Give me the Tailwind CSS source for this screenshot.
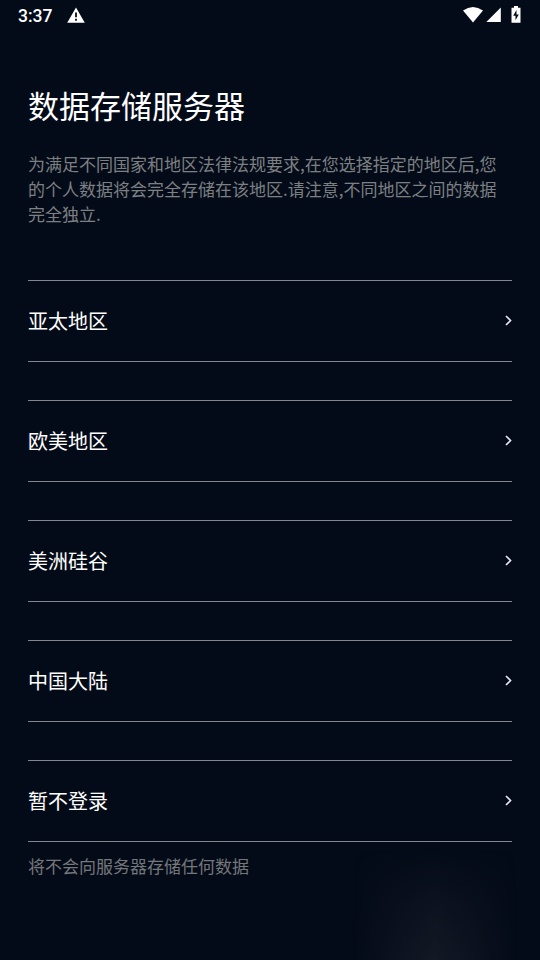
<!DOCTYPE html>
<html lang="zh-CN">
<head>
<meta charset="utf-8">
<title>数据存储服务器</title>
<script src="https://cdn.jsdelivr.net/npm/@tailwindcss/browser@4"></script>
</head>
<body class="w-[540px] h-[960px] overflow-hidden bg-[#040b18] text-white font-['Noto_Sans_CJK_SC',sans-serif]">
<div class="relative h-full flex flex-col overflow-hidden">
  <header class="h-8 shrink-0 flex items-start pl-[18px] pr-[19px] font-[Roboto,sans-serif]">
    <span class="w-[35px] text-[17.5px] leading-8 font-medium">3:37</span>
    <svg class="ml-[14px] mt-[7px]" width="18" height="16" viewBox="0 0 18 16"><path fill="#fff" fill-rule="evenodd" d="M9 .5 17.8 15.7H.2ZM8.1 5.5v4.7h1.8V5.5ZM8.1 11.7v2h1.8v-2Z"/></svg>
    <div class="ml-auto mt-[6px] flex items-start">
      <svg class="mt-px" width="20" height="16" viewBox="0 0 20 16"><path fill="#fff" d="M0 3.5Q10-3.5 20 3.5L10 15.5Z"/></svg>
      <svg class="ml-[3px] mt-px" width="15" height="15" viewBox="0 0 15 15"><path fill="#fff" d="M14.8 .5V15H.3Z"/></svg>
      <svg class="ml-[10px]" width="10" height="17" viewBox="0 0 10 17"><path fill="#fff" fill-rule="evenodd" d="M3 0h4v1.7h2.5V16.8H.5V1.7H3ZM5.5 4 2.2 9.8h2.3v4.4L7.8 8.5H5.5Z"/></svg>
    </div>
  </header>
  <main class="px-7 pt-[52px]">
    <h1 class="text-[31px] leading-[42px]">数据存储服务器</h1>
    <p class="mt-[25px] whitespace-nowrap text-[17px] leading-[25px] text-[#7d8083]">为满足不同国家和地区法律法规要求,在您选择指定的地区后,您<br>的个人数据将会完全存储在该地区.请注意,不同地区之间的数据<br>完全独立.</p>
    <div class="mt-[54px] flex flex-col gap-[38px] text-[20px]">
      <div class="h-[82px] border-y border-[#84868d] flex items-center justify-between"><span>亚太地区</span><svg class="mb-[2px]" width="7" height="11" viewBox="0 0 7 11"><path d="m1 1 4.5 4.5L1 10" fill="none" stroke="#e4e6ed" stroke-width="1.7"/></svg></div>
      <div class="h-[82px] border-y border-[#84868d] flex items-center justify-between"><span>欧美地区</span><svg class="mb-[2px]" width="7" height="11" viewBox="0 0 7 11"><path d="m1 1 4.5 4.5L1 10" fill="none" stroke="#e4e6ed" stroke-width="1.7"/></svg></div>
      <div class="h-[82px] border-y border-[#84868d] flex items-center justify-between"><span>美洲硅谷</span><svg class="mb-[2px]" width="7" height="11" viewBox="0 0 7 11"><path d="m1 1 4.5 4.5L1 10" fill="none" stroke="#e4e6ed" stroke-width="1.7"/></svg></div>
      <div class="h-[82px] border-y border-[#84868d] flex items-center justify-between"><span>中国大陆</span><svg class="mb-[2px]" width="7" height="11" viewBox="0 0 7 11"><path d="m1 1 4.5 4.5L1 10" fill="none" stroke="#e4e6ed" stroke-width="1.7"/></svg></div>
      <div class="h-[82px] border-y border-[#84868d] flex items-center justify-between"><span>暂不登录</span><svg class="mb-[2px]" width="7" height="11" viewBox="0 0 7 11"><path d="m1 1 4.5 4.5L1 10" fill="none" stroke="#e4e6ed" stroke-width="1.7"/></svg></div>
    </div>
    <p class="mt-[11px] text-[17px] leading-[25px] text-[#75777b]">将不会向服务器存储任何数据</p>
  </main>
  <div class="absolute left-[354px] top-[850px] w-[162px] h-[110px] bg-[#131925] [mask-image:linear-gradient(to_right,transparent,#0009_28%,#000_50%,#0009_72%,transparent),linear-gradient(to_bottom,transparent,#0009_50%,#000)] [mask-composite:intersect]"></div>
</div>
</body>
</html>
